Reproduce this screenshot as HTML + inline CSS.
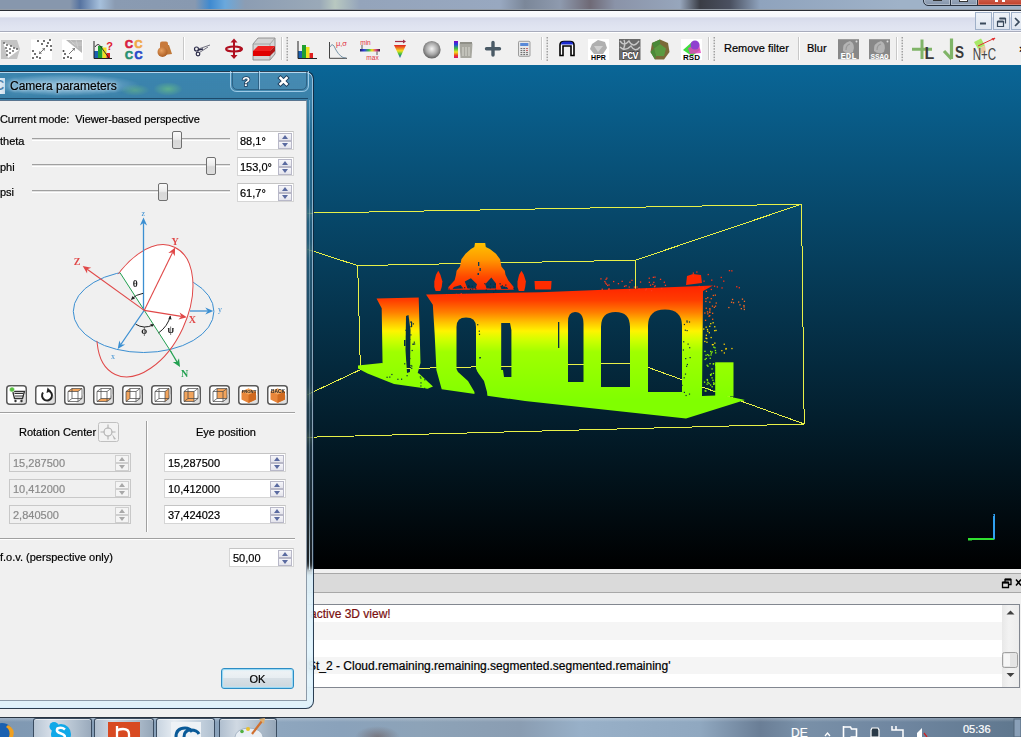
<!DOCTYPE html><html><head><meta charset="utf-8"><style>
*{box-sizing:border-box}
html,body{margin:0;padding:0}
body{width:1021px;height:737px;overflow:hidden;position:relative;font-family:"Liberation Sans",sans-serif;font-size:11px;color:#000;background:#f0f0f0}
.a{position:absolute}
.t{position:absolute;white-space:nowrap;line-height:13px;font-size:11px;-webkit-text-stroke:0.2px currentColor}
#desk{left:0;top:0;width:1021px;height:11px;background:linear-gradient(90deg,#8797ad 0,#8797ad 70px,#5673a0 80px,#a6c0dc 100px,#8a9bb2 115px,#8899b0 195px,#3f8ad0 210px,#6aa8dc 225px,#8c9db3 245px,#9aa9b8 320px,#b8c8c0 335px,#94a4bb 360px,#98a8c0 500px,#7b8799 525px,#8e9aae 560px,#6f6a76 590px,#8a93a8 615px,#97a6bc 680px,#3a3d45 700px,#4a5060 730px,#8fa3bd 760px,#9fb2c8 900px)}
#capline{left:0;top:9px;width:1021px;height:2px;border-top:1px solid rgba(220,230,240,0.6);background:#2a2e36}
#menubar{left:0;top:11px;width:1021px;height:21px;background:linear-gradient(#fbfcfe 0,#f5f7fb 5.5px,#d7dbeb 7px,#dde1ef 60%,#e2e6f2 100%);border-bottom:1px solid #a8acbc}
#toolbar{left:0;top:32px;width:1021px;height:33px;background:#f0f0f0;border-top:1px solid #fff}
#view{left:0;top:65px;width:1021px;height:504px;background:linear-gradient(#0a6697,#000)}
#bottom{left:0;top:569px;width:1021px;height:148px;background:#f0f0f0}
#ctitle{left:0;top:574px;width:1021px;height:20px;background:#dcdcdc;border-top:1px solid #a0a0a0;border-bottom:1px solid #a0a0a0}
#cbox{left:300px;top:604px;width:720px;height:84px;border:1px solid #828790;background:#fff}
#taskbar{left:0;top:717px;width:1021px;height:20px;background:linear-gradient(90deg,#5b7592,#6b84a0 30%,#5d7895 60%,#6f88a3 100%);border-top:1px solid #3a4a5c}
#dlg{left:-8px;top:71px;width:322px;height:638px;border-radius:0 8px 8px 0;background:linear-gradient(rgba(190,220,245,0.28) 0,rgba(190,220,245,0.28) 28px,rgba(190,220,245,0.16) 60px,rgba(190,220,245,0.14) 494px,rgba(220,242,252,0.78) 504px);-webkit-backdrop-filter:blur(4px);backdrop-filter:blur(4px);border:1px solid rgba(10,30,50,0.85);box-shadow:inset 0 1px 0 rgba(210,235,255,0.8),inset -1px 0 0 rgba(210,235,255,0.6),inset 0 -1px 0 rgba(210,235,255,0.6)}
#dlgc{left:0;top:100px;width:307px;height:601px;background:#f0f0f0;border-right:1px solid #8c9aa8;border-bottom:1px solid #8c9aa8;border-top:1px solid #5a7590}
.tglow{text-shadow:0 0 6px #cfe3f2,0 0 3px #cfe3f2}
.tbtn{border:1px solid rgba(220,235,250,0.55);border-top:none;background:rgba(255,255,255,0.06)}
.groove{position:absolute;left:32px;width:198px;height:3px;border-top:1px solid #a0a0a0;border-bottom:1px solid #fff;background:#e3e3e3}
.handle{position:absolute;width:10px;height:18px;border:1px solid #707070;border-radius:2px;background:linear-gradient(#fafafa,#ececec 45%,#d8d8d8 55%,#dcdcdc)}
.spin{position:absolute;height:19px;border:1px solid #d5d5d5;border-top-color:#c4c4c4;background:#fff}
.spin .sb{position:absolute;right:1px;top:1px;width:14px;height:15px}
.spin .sb i{position:absolute;left:0;width:14px;height:8px;border:1px solid #b8b8c8;background:linear-gradient(#f6f6fa,#e4e4ec)}
.spin .sb i.up{top:0}
.spin .sb i.dn{top:8px}
.spin .sb i:after{content:"";position:absolute;left:3px;border-left:3px solid transparent;border-right:3px solid transparent}
.spin .sb i.up:after{top:1px;border-bottom:4px solid #5a6aa0}
.spin .sb i.dn:after{top:1px;border-top:4px solid #5a6aa0}
.spin.dis{background:#f0f0f0;border-color:#c8c8c8}
.spin.dis .t{color:#8a8a8a}
.spin.dis .sb i{border-color:#cfcfcf;background:#f4f4f4}
.spin.dis .sb i.up:after{border-bottom-color:#a8a8a8}
.spin.dis .sb i.dn:after{border-top-color:#a8a8a8}
.vbtn{position:absolute;top:385px;width:21px;height:20px;border:1px solid #707070;border-radius:3px;background:linear-gradient(#f6f6f6,#e8e8e8 50%,#d9d9d9 51%,#d0d0d0)}
</style></head><body><div id="desk" class="a"></div><div id="capline" class="a"></div><div id="menubar" class="a"></div><div id="toolbar" class="a"></div><svg class="a" style="left:0;top:0" width="1021" height="66" viewBox="0 0 1021 66"><defs>
<linearGradient id="rb" x1="0" y1="0" x2="0" y2="1"><stop offset="0" stop-color="#e02020"/><stop offset="0.25" stop-color="#f08020"/><stop offset="0.45" stop-color="#f0e020"/><stop offset="0.7" stop-color="#40c040"/><stop offset="1" stop-color="#2040d0"/></linearGradient>
<linearGradient id="rbv" x1="0" y1="0" x2="0" y2="1"><stop offset="0" stop-color="#8000c0"/><stop offset="0.2" stop-color="#2040e0"/><stop offset="0.45" stop-color="#40c040"/><stop offset="0.65" stop-color="#f0e020"/><stop offset="0.85" stop-color="#f04020"/><stop offset="1" stop-color="#d01080"/></linearGradient>
<linearGradient id="rbh" x1="0" y1="0" x2="1" y2="0"><stop offset="0" stop-color="#202060"/><stop offset="0.2" stop-color="#3040e0"/><stop offset="0.45" stop-color="#40c040"/><stop offset="0.6" stop-color="#f0e020"/><stop offset="0.8" stop-color="#e04080"/><stop offset="1" stop-color="#302040"/></linearGradient>
<radialGradient id="sph" cx="0.5" cy="0.45" r="0.55"><stop offset="0" stop-color="#f4f4f4"/><stop offset="0.6" stop-color="#a8a8a8"/><stop offset="1" stop-color="#606060"/></radialGradient>
<radialGradient id="brn" cx="0.4" cy="0.35" r="0.7"><stop offset="0" stop-color="#e8a060"/><stop offset="1" stop-color="#a85a20"/></radialGradient>
</defs><path d="M1,40 L17,40 L20,49 L17,59 L1,59 Z" fill="#c4c4c4"/><path d="M3,42 L19,50 L8,58 Z" fill="#fff"/><circle cx="4" cy="43" r="0.9" fill="#555"/><circle cx="7" cy="45" r="0.9" fill="#555"/><circle cx="11" cy="46" r="0.9" fill="#555"/><circle cx="14" cy="48" r="0.9" fill="#555"/><circle cx="17" cy="49" r="0.9" fill="#555"/><circle cx="6" cy="48" r="0.9" fill="#555"/><circle cx="10" cy="49" r="0.9" fill="#555"/><circle cx="13" cy="51" r="0.9" fill="#555"/><circle cx="7" cy="51" r="0.9" fill="#555"/><circle cx="10" cy="53" r="0.9" fill="#555"/><circle cx="7" cy="55" r="0.9" fill="#555"/><rect x="31" y="39.5" width="21" height="20.5" fill="#fff"/><circle cx="38" cy="41" r="1" fill="#444"/><circle cx="44" cy="41" r="1" fill="#444"/><circle cx="50" cy="40" r="1" fill="#444"/><circle cx="42" cy="44" r="1" fill="#444"/><circle cx="48" cy="43" r="1" fill="#444"/><circle cx="51" cy="46" r="1" fill="#444"/><circle cx="47" cy="46" r="1" fill="#444"/><circle cx="51" cy="50" r="1" fill="#444"/><circle cx="33" cy="51" r="1" fill="#444"/><circle cx="35" cy="54" r="1" fill="#444"/><circle cx="33" cy="58" r="1" fill="#444"/><circle cx="37" cy="57" r="1" fill="#444"/><circle cx="40" cy="58" r="1" fill="#444"/><path d="M39,54 L45,48" stroke="#777" stroke-width="1"/><path d="M45,48 l-3,0.5 l2.5,2.5z M39,54 l0.5,-3 l2.5,2.5z" fill="#777"/><rect x="62" y="39.5" width="21" height="20.5" fill="#fff"/><path d="M66,40 L82,40 L82,53 Z" fill="#b8b8b8"/><path d="M70,40 L75,45 L82,45 M76,40 L78,48 M72,43 L82,43" stroke="#d8d8d8" stroke-width="0.6" fill="none"/><circle cx="63.5" cy="51" r="1" fill="#444"/><circle cx="65" cy="54" r="1" fill="#444"/><circle cx="64" cy="58" r="1" fill="#444"/><circle cx="68" cy="57" r="1" fill="#444"/><circle cx="71" cy="58" r="1" fill="#444"/><path d="M69,54 L75,48" stroke="#777" stroke-width="1"/><path d="M75,48 l-3,0.5 l2.5,2.5z" fill="#777"/><rect x="94" y="51" width="4" height="7.5" fill="#1a60b0"/><rect x="98" y="46" width="4.5" height="12.5" fill="#20a030"/><rect x="102.5" y="47.5" width="4" height="11" fill="#f0e020"/><rect x="106.5" y="53" width="3.5" height="5.5" fill="#e02020"/><path d="M94,41 L94,58.5 L112,58.5" stroke="#222" stroke-width="1" fill="none"/><path d="M95,47 Q98,42 101,47 L109,58" stroke="#222" stroke-width="0.9" fill="none"/><text x="109.5" y="50" font-size="11" font-weight="bold" fill="#e02030" text-anchor="middle" style="font-family:'Liberation Sans'">?</text><text x="129" y="48" font-size="11" font-weight="bold" fill="#d81e3c" stroke="#d81e3c" stroke-width="0.7" text-anchor="middle" style="font-family:'Liberation Sans'">C</text><text x="138.5" y="48" font-size="11" font-weight="bold" fill="#f0a848" stroke="#f0a848" stroke-width="0.7" text-anchor="middle" style="font-family:'Liberation Sans'">C</text><text x="129" y="58.5" font-size="11" font-weight="bold" fill="#289070" stroke="#289070" stroke-width="0.7" text-anchor="middle" style="font-family:'Liberation Sans'">C</text><text x="138.5" y="58.5" font-size="11" font-weight="bold" fill="#2848c8" stroke="#2848c8" stroke-width="0.7" text-anchor="middle" style="font-family:'Liberation Sans'">C</text><path d="M164,45 L169,45 L172,54 L164,55 Z" fill="#c07838"/><rect x="160" y="41.5" width="8" height="9" rx="2" fill="#c87a3c"/><circle cx="162.5" cy="52" r="5" fill="url(#brn)"/><rect x="183" y="37" width="1" height="23" fill="#c8c8c8"/><rect x="184" y="37" width="1" height="23" fill="#fff"/><circle cx="196.5" cy="49" r="2" fill="none" stroke="#2a2a48" stroke-width="1.2"/><circle cx="198" cy="54" r="1.8" fill="none" stroke="#2a2a48" stroke-width="1.2"/><path d="M198.5,49 L210,45 M199.5,52.5 L208,47" stroke="#707080" stroke-width="1"/><path d="M198,50 L203,49" stroke="#2a2a48" stroke-width="1.3"/><g stroke="#b01020" stroke-width="2" fill="none"><path d="M234,41 L234,57"/><ellipse cx="234" cy="49" rx="8" ry="2.5"/></g><path d="M234,38.5 l-3.5,4 h7z M234,59 l-3.5,-4 h7z M243,49 l-3.5,-3 v6z" fill="#b01020"/><path d="M253,44 L258,38 L275,38 L275,54 L270,60 L253,60 Z" fill="#d4d4d4" stroke="#8a8a8a" stroke-width="0.9"/><path d="M253,44 L270,44 L275,38 M270,44 L270,60" stroke="#9a9a9a" stroke-width="0.8" fill="none"/><path d="M253,51 L258,46 L275,46 L270,51Z" fill="#f02020"/><path d="M253,51 L270,51 L270,56 L253,56 Z" fill="#e00000"/><path d="M270,51 L275,46 L275,51 L270,56Z" fill="#b01818"/><rect x="281" y="37" width="1" height="23" fill="#c8c8c8"/><rect x="282" y="37" width="1" height="23" fill="#fff"/><rect x="286.5" y="37.0" width="1.5" height="1.5" fill="#a0a0a0"/><rect x="286.5" y="39.8" width="1.5" height="1.5" fill="#a0a0a0"/><rect x="286.5" y="42.6" width="1.5" height="1.5" fill="#a0a0a0"/><rect x="286.5" y="45.4" width="1.5" height="1.5" fill="#a0a0a0"/><rect x="286.5" y="48.2" width="1.5" height="1.5" fill="#a0a0a0"/><rect x="286.5" y="51.0" width="1.5" height="1.5" fill="#a0a0a0"/><rect x="286.5" y="53.8" width="1.5" height="1.5" fill="#a0a0a0"/><rect x="286.5" y="56.6" width="1.5" height="1.5" fill="#a0a0a0"/><rect x="286.5" y="59.4" width="1.5" height="1.5" fill="#a0a0a0"/><rect x="298" y="51" width="4" height="7.5" fill="#1a60b0"/><rect x="302" y="45" width="4" height="13.5" fill="#20a030"/><rect x="306" y="47" width="3.5" height="11.5" fill="#f0e020"/><rect x="309.5" y="53" width="3.5" height="5.5" fill="#e02020"/><path d="M298,41 L298,58.5 L317,58.5" stroke="#222" stroke-width="1" fill="none"/><path d="M329.5,42 L329.5,58.3 L347,58.3" stroke="#444" stroke-width="1" fill="none"/><path d="M330,47 Q332,43 334,46 Q338,55 343,57.5 L346,58" stroke="#6a8aa0" stroke-width="0.9" fill="none"/><text x="341.5" y="46" font-size="7.5" fill="#e03040" text-anchor="middle" style="font-family:'Liberation Sans'">μ,σ</text><text x="365.5" y="45" font-size="6.5" fill="#e03040" text-anchor="middle" style="font-family:'Liberation Sans'">min</text><text x="372.5" y="59.5" font-size="6.5" fill="#e03040" text-anchor="middle" style="font-family:'Liberation Sans'">max</text><rect x="360" y="49" width="20" height="2.5" fill="url(#rbh)"/><path d="M362,45 L362,49 M377,51.5 L377,55" stroke="#333" stroke-width="0.8"/><path d="M394,45 L406,45 L400,58 Z" fill="url(#rb)"/><path d="M395,41.5 L404,41.5" stroke="#a03048" stroke-width="1.2"/><path d="M406,41.5 l-3,-2 v4z" fill="#a03048"/><circle cx="431.8" cy="49.7" r="8.8" fill="url(#sph)"/><rect x="454" y="41" width="4" height="17" fill="url(#rbv)"/><path d="M459.5,43.5 L472.5,43.5 L471.5,58 L460.5,58 Z" fill="#a8a8a0"/><rect x="460" y="42" width="12" height="2" fill="#909088"/><path d="M463,47 V56 M466,47 V56 M469,47 V56" stroke="#e0e0d8" stroke-width="0.9"/><path d="M493,42.5 V55 M486.5,48.8 H499.5" stroke="#4a5a66" stroke-width="3.4" stroke-linecap="round"/><rect x="518.5" y="41.3" width="11.5" height="15" rx="1" fill="#e8e8e8" stroke="#888" stroke-width="0.8"/><rect x="520.2" y="43" width="8.2" height="3" fill="#5a8ad8"/><rect x="520.5" y="48.0" width="1.8" height="1.1" fill="#707070"/><rect x="523.3" y="48.0" width="1.8" height="1.1" fill="#707070"/><rect x="526.1" y="48.0" width="1.8" height="1.1" fill="#c06060"/><rect x="520.5" y="50.0" width="1.8" height="1.1" fill="#707070"/><rect x="523.3" y="50.0" width="1.8" height="1.1" fill="#707070"/><rect x="526.1" y="50.0" width="1.8" height="1.1" fill="#c06060"/><rect x="520.5" y="52.0" width="1.8" height="1.1" fill="#707070"/><rect x="523.3" y="52.0" width="1.8" height="1.1" fill="#707070"/><rect x="526.1" y="52.0" width="1.8" height="1.1" fill="#707070"/><rect x="520.5" y="54.0" width="1.8" height="1.1" fill="#707070"/><rect x="523.3" y="54.0" width="1.8" height="1.1" fill="#707070"/><rect x="526.1" y="54.0" width="1.8" height="1.1" fill="#707070"/><rect x="541" y="37" width="1" height="23" fill="#c8c8c8"/><rect x="542" y="37" width="1" height="23" fill="#fff"/><rect x="546.5" y="37.0" width="1.5" height="1.5" fill="#a0a0a0"/><rect x="546.5" y="39.8" width="1.5" height="1.5" fill="#a0a0a0"/><rect x="546.5" y="42.6" width="1.5" height="1.5" fill="#a0a0a0"/><rect x="546.5" y="45.4" width="1.5" height="1.5" fill="#a0a0a0"/><rect x="546.5" y="48.2" width="1.5" height="1.5" fill="#a0a0a0"/><rect x="546.5" y="51.0" width="1.5" height="1.5" fill="#a0a0a0"/><rect x="546.5" y="53.8" width="1.5" height="1.5" fill="#a0a0a0"/><rect x="546.5" y="56.6" width="1.5" height="1.5" fill="#a0a0a0"/><rect x="546.5" y="59.4" width="1.5" height="1.5" fill="#a0a0a0"/><path d="M560,55.5 L560,45 Q560,41.5 564,41.5 L570,41.5 Q574,41.5 574,45 L574,55.5 L571,55.5 L571,46 L563,46 L563,55.5 Z" fill="#fff" stroke="#000" stroke-width="1.6"/><path d="M561,44.5 Q561,41.5 564,41.5 L570,41.5 Q573,41.5 573,44.5 Z" fill="#1a2ad0"/><rect x="588" y="39" width="21" height="21" fill="#fff"/><path d="M592,44 L598,40 L605,42 L607,48 L603,54 L594,54 L590,49 Z" fill="#b0b0b0"/><path d="M594,46 L603,46 L598,52 Z" fill="#d0d0d0"/><text x="598.5" y="59.5" font-size="7" font-weight="bold" fill="#000" text-anchor="middle" style="font-family:'Liberation Sans'">HPR</text><rect x="619" y="39" width="21.5" height="21" fill="#6a6a6a"/><path d="M620,41 Q624,47 629,41 Q633,49 639,41 M620,47 Q625,52 631,46 Q635,53 640,47 M624,40 Q626,44 623,50" stroke="#c8c8c8" stroke-width="1.4" fill="none"/><text x="629.8" y="59" font-size="10" font-weight="bold" fill="#fff" stroke="#222" stroke-width="0.8" paint-order="stroke" text-anchor="middle" style="font-family:'Liberation Mono'" letter-spacing="-0.8">PCV</text><path d="M660,39.5 L668,43 L669.5,52 L664,59.5 L655,59.5 L650.5,52 L652,43 Z" fill="#7a6a38"/><path d="M660,44 L666,48.5 L664,56 L656,56 L654,48.5 Z" fill="#5a9a40"/><path d="M652,43 L660,39.5 L660,44 L654,48.5 Z M650.5,52 L654,48.5 L656,56 L655,59.5Z" fill="#4a8a38"/><rect x="681" y="39" width="21" height="21" fill="#fff"/><path d="M683,50 L692,42 L700,50 L692,56 Z" fill="#40e040"/><path d="M688,48 L699,44 L701,53 L690,54Z" fill="#e040c0" opacity="0.85"/><circle cx="695" cy="45" r="4.5" fill="#9040d0"/><text x="691.5" y="59.5" font-size="8" font-weight="bold" fill="#000" text-anchor="middle" style="font-family:'Liberation Sans'">RSD</text><rect x="708" y="37" width="1" height="23" fill="#c8c8c8"/><rect x="709" y="37" width="1" height="23" fill="#fff"/><rect x="713.5" y="37.0" width="1.5" height="1.5" fill="#a0a0a0"/><rect x="713.5" y="39.8" width="1.5" height="1.5" fill="#a0a0a0"/><rect x="713.5" y="42.6" width="1.5" height="1.5" fill="#a0a0a0"/><rect x="713.5" y="45.4" width="1.5" height="1.5" fill="#a0a0a0"/><rect x="713.5" y="48.2" width="1.5" height="1.5" fill="#a0a0a0"/><rect x="713.5" y="51.0" width="1.5" height="1.5" fill="#a0a0a0"/><rect x="713.5" y="53.8" width="1.5" height="1.5" fill="#a0a0a0"/><rect x="713.5" y="56.6" width="1.5" height="1.5" fill="#a0a0a0"/><rect x="713.5" y="59.4" width="1.5" height="1.5" fill="#a0a0a0"/><rect x="798" y="37" width="1" height="23" fill="#c8c8c8"/><rect x="799" y="37" width="1" height="23" fill="#fff"/><rect x="838" y="39.2" width="21" height="20" fill="#888"/><path d="M843,51 Q842,43 850,41 Q856,44 853,52 Q848,55 843,51 Z" fill="#b4b4b4"/><path d="M846,50 Q846,45 850,44" stroke="#999" stroke-width="1.2" fill="none"/><circle cx="856.5" cy="41.5" r="1" fill="#ddd"/><text x="848.5" y="58.6" font-size="9" fill="#fff" text-anchor="middle" style="font-family:'Liberation Mono'" font-weight="bold">EDL</text><rect x="869" y="39.2" width="21" height="20" fill="#888"/><path d="M874,51 Q873,43 881,41 Q887,44 884,52 Q879,55 874,51 Z" fill="#b4b4b4"/><path d="M877,50 Q877,45 881,44" stroke="#999" stroke-width="1.2" fill="none"/><circle cx="887.5" cy="41.5" r="1" fill="#ddd"/><text x="879.5" y="58.6" font-size="7.6" fill="#fff" text-anchor="middle" style="font-family:'Liberation Mono'" font-weight="bold">SSAO</text><rect x="896" y="37" width="1" height="23" fill="#c8c8c8"/><rect x="897" y="37" width="1" height="23" fill="#fff"/><rect x="901.5" y="37.0" width="1.5" height="1.5" fill="#a0a0a0"/><rect x="901.5" y="39.8" width="1.5" height="1.5" fill="#a0a0a0"/><rect x="901.5" y="42.6" width="1.5" height="1.5" fill="#a0a0a0"/><rect x="901.5" y="45.4" width="1.5" height="1.5" fill="#a0a0a0"/><rect x="901.5" y="48.2" width="1.5" height="1.5" fill="#a0a0a0"/><rect x="901.5" y="51.0" width="1.5" height="1.5" fill="#a0a0a0"/><rect x="901.5" y="53.8" width="1.5" height="1.5" fill="#a0a0a0"/><rect x="901.5" y="56.6" width="1.5" height="1.5" fill="#a0a0a0"/><rect x="901.5" y="59.4" width="1.5" height="1.5" fill="#a0a0a0"/><path d="M922,39.5 V59 M912,49.2 H932" stroke="#80b468" stroke-width="3"/><text x="929.5" y="58.5" font-size="16" font-weight="bold" fill="#3a3a3a" text-anchor="middle" style="font-family:'Liberation Sans'">L</text><path d="M951.5,38.5 V59 M944,51 L951.5,59" stroke="#80b468" stroke-width="3.2"/><text x="959.5" y="58.5" font-size="16" font-weight="bold" fill="#3a3a3a" text-anchor="middle" style="font-family:'Liberation Sans'" transform="translate(959.5 0) scale(0.85 1) translate(-959.5 0)">S</text><path d="M974,42 L981,38.5 L985,45.5 L978,49Z" fill="#a8e868"/><path d="M978,49 L985,45.5 L986,52 L980,54Z" fill="#e8c8a0"/><path d="M978,46 L995,38" stroke="#e03030" stroke-width="1"/><path d="M995.5,38 l-4,0.2 l1.8,2.6z" fill="#e03030"/><text x="984.5" y="60" font-size="16.5" fill="#444" text-anchor="middle" style="font-family:'Liberation Sans'" transform="translate(984.5 0) scale(0.7 1) translate(-984.5 0)">N+C</text><text x="1019" y="53" font-size="11" font-weight="bold" fill="#000" style="font-family:'Liberation Sans'">×</text></svg><div class="t" style="left:724px;top:42px">Remove filter</div><div class="t" style="left:807px;top:42px">Blur</div><div id="view" class="a"></div><svg class="a" style="left:0;top:0" width="1021" height="570" viewBox="0 0 1021 570"><line x1="280" y1="213.6" x2="801.5" y2="204.2" stroke="#e8f048" stroke-width="1" shape-rendering="crispEdges"/><line x1="801.5" y1="204.2" x2="804.2" y2="424" stroke="#e8f048" stroke-width="1" shape-rendering="crispEdges"/><line x1="280" y1="438" x2="804.2" y2="424" stroke="#e8f048" stroke-width="1" shape-rendering="crispEdges"/><line x1="280" y1="240.5" x2="357.7" y2="265.6" stroke="#e8f048" stroke-width="1" shape-rendering="crispEdges"/><line x1="357.7" y1="265.6" x2="635.3" y2="260.2" stroke="#e8f048" stroke-width="1" shape-rendering="crispEdges"/><line x1="635.3" y1="260.2" x2="801.5" y2="204.2" stroke="#e8f048" stroke-width="1" shape-rendering="crispEdges"/><line x1="357.7" y1="265.6" x2="360.4" y2="369.7" stroke="#e8f048" stroke-width="1" shape-rendering="crispEdges"/><line x1="360.4" y1="369.7" x2="280" y2="407.5" stroke="#e8f048" stroke-width="1" shape-rendering="crispEdges"/><line x1="360.4" y1="369.7" x2="636" y2="363" stroke="#e8f048" stroke-width="1" shape-rendering="crispEdges"/><line x1="636" y1="363" x2="804.2" y2="424" stroke="#e8f048" stroke-width="1" shape-rendering="crispEdges"/><line x1="635.3" y1="260.2" x2="636" y2="363" stroke="#e8f048" stroke-width="1" shape-rendering="crispEdges"/><path d="M969,539 L994.5,539" stroke="#30e030" stroke-width="2"/><path d="M994,539 L994,516" stroke="#30a0f0" stroke-width="2"/><path d="M993,514 l2,0 l0,4z" fill="#30a0f0"/><rect x="968" y="538" width="4" height="2.5" fill="#30e030"/></svg><svg class="a" style="left:0;top:0" width="1021" height="570" viewBox="0 0 1021 570"><defs>
<linearGradient id="cg" gradientUnits="userSpaceOnUse" x1="0" y1="284" x2="0" y2="400">
<stop offset="0" stop-color="#ff2000"/><stop offset="0.138" stop-color="#ff3c00"/><stop offset="0.241" stop-color="#ff7c00"/><stop offset="0.328" stop-color="#ffc000"/><stop offset="0.405" stop-color="#fff400"/><stop offset="0.483" stop-color="#d0ff00"/><stop offset="0.586" stop-color="#a0ff00"/><stop offset="1" stop-color="#80ff00"/></linearGradient>
<linearGradient id="dg" gradientUnits="userSpaceOnUse" x1="0" y1="242" x2="0" y2="292">
<stop offset="0" stop-color="#ffc400"/><stop offset="0.35" stop-color="#ff9800"/><stop offset="0.7" stop-color="#ff4800"/><stop offset="1" stop-color="#ff2000"/></linearGradient>
<mask id="holes" maskUnits="userSpaceOnUse" x="0" y="0" width="1021" height="570"><rect width="1021" height="570" fill="#fff"/>
<g fill="#000"><path d="M406,316 L408.5,315 L410.5,330 L410,372 L407,373 L405.5,350 Z"/><rect x="404" y="340" width="1.5" height="6"/><rect x="411" y="322" width="1.2" height="5"/><path d="M456.5,369 L456.5,327 Q456.5,317.6 466,317.6 Q476,317.6 476,327 L476,368.5 L477.5,372 L484,381 L487,392 L488,402 L474,402 L474.5,392 L468,381 L458,372 Z"/><path d="M501.2,370 L501.2,323 L510,323 L511.4,330 L511.4,377 L504,377 L503,370 Z"/><rect x="558" y="322" width="1.3" height="26"/><path d="M568,382 L568,322 Q568,312 575,312 Q583.5,312 583.5,324 L583.5,382 Z"/><path d="M601,387 L601,327 Q601,312 615.5,312 Q630,312 630,327 L630,387 Z"/><path d="M648,392 L648,326 Q648,309.5 665,309.5 Q682,309.5 682,326 L682,392 Z"/></g></mask></defs><g mask="url(#holes)"><path d="M376.5,298.5 L418.7,297.5 L420.5,363 L417,375.5 L390,372 L382.6,366.4 L381.7,308.2 Z" fill="url(#cg)"/><path d="M358,365.5 L382,363 L419,373.4 L433,386.6 L427.6,388.8 L394,384 L367.6,373.4 L358,368.5 Z" fill="url(#cg)"/><path d="M426,294.5 L540,292.2 L713,285.4 L703,291 L702,396 L723,395.3 L745,400 L686,418.5 L525,401 L441.7,389.3 L436.4,369.9 L434.6,332.9 L432.8,304.7 Z" fill="url(#cg)"/><path d="M715.2,362.3 L733.5,362.3 L733.5,396.5 L715.2,396.5 Z" fill="url(#cg)"/><polygon points="475.0,242.9 485.2,242.9 485.8,247.0 489.9,249.0 496.0,253.8 500.1,259.2 501.4,266.6 504.8,270.7 505.5,274.8 508.2,280.2 513.7,287.0 513.7,289.7 447.8,289.7 448.5,287.0 454.6,280.2 456.0,274.8 456.6,270.7 460.0,266.6 461.4,259.2 465.5,253.8 470.9,249.0 474.3,247.0" fill="url(#dg)"/><polygon points="438.3,270.7 440.4,274.8 442.4,281.6 441.7,287.0 440.4,291.1 435.6,291.1 434.3,287.0 434.3,281.6 436.0,274.8" fill="#ff3000"/><polygon points="521.5,270.7 523.8,274.8 525.9,281.6 525.2,287.0 524.2,291.1 518.8,291.1 517.5,287.0 517.5,281.6 519.1,274.8" fill="#ff3000"/><g fill="#083a58"><polygon points="464.8,281.6 470.9,278.2 477.0,284.3 475.7,288.6 467.5,288.4"/><polygon points="485.2,284.3 491.3,277.5 496.0,283.6 496.0,288.4 486.5,288.6"/><polygon points="453.9,287.0 460.7,285.0 463.4,288.6 452.6,289.0"/><polygon points="500.1,285.7 506.9,287.0 508.2,289.0 501.4,289.0"/><rect x="478" y="262" width="1.3" height="4"/><rect x="479.5" y="268" width="1.3" height="3"/><rect x="477.5" y="273" width="1.5" height="2"/></g><path d="M534.5,281 L551.6,281 L551,289.5 L535,289.5 Z" fill="#ff2c00"/><path d="M687,276 L693,274 L701,275 L702,283 L686,285 Z" fill="#ff2800"/><g fill="#062c42"><rect x="406.4" y="347.4" width="1.2" height="1.2"/><rect x="407.7" y="350.6" width="1.2" height="1.2"/><rect x="410.3" y="321.5" width="1.2" height="1.2"/><rect x="404.1" y="363.2" width="1.2" height="1.2"/><rect x="406.6" y="330.7" width="1.2" height="1.2"/><rect x="414.0" y="343.4" width="1.2" height="1.2"/><rect x="412.4" y="343.7" width="1.2" height="1.2"/><rect x="410.4" y="326.1" width="1.2" height="1.2"/><rect x="410.3" y="364.9" width="1.2" height="1.2"/><rect x="409.2" y="358.0" width="1.2" height="1.2"/><rect x="410.7" y="321.5" width="1.2" height="1.2"/><rect x="411.6" y="349.9" width="1.2" height="1.2"/><rect x="407.0" y="319.7" width="1.2" height="1.2"/><rect x="412.7" y="343.5" width="1.2" height="1.2"/><rect x="411.2" y="365.5" width="1.2" height="1.2"/><rect x="411.1" y="367.7" width="1.2" height="1.2"/><rect x="407.9" y="361.2" width="1.2" height="1.2"/><rect x="408.4" y="368.5" width="1.2" height="1.2"/><rect x="412.8" y="323.3" width="1.2" height="1.2"/><rect x="405.4" y="329.7" width="1.2" height="1.2"/><rect x="413.7" y="341.6" width="1.2" height="1.2"/><rect x="410.3" y="334.3" width="1.2" height="1.2"/><rect x="409.1" y="338.8" width="1.2" height="1.2"/><rect x="407.5" y="349.6" width="1.2" height="1.2"/><rect x="409.8" y="366.8" width="1.2" height="1.2"/><rect x="478.7" y="380.4" width="1.2" height="1.2"/><rect x="479.4" y="384.4" width="1.2" height="1.2"/><rect x="478.7" y="330.6" width="1.2" height="1.2"/><rect x="479.4" y="382.7" width="1.2" height="1.2"/><rect x="479.6" y="357.0" width="1.2" height="1.2"/><rect x="478.9" y="333.7" width="1.2" height="1.2"/><rect x="479.3" y="357.3" width="1.2" height="1.2"/><rect x="477.1" y="324.1" width="1.2" height="1.2"/><rect x="479.4" y="384.3" width="1.2" height="1.2"/><rect x="476.4" y="372.0" width="1.2" height="1.2"/><rect x="684.7" y="329.6" width="1.2" height="1.2"/><rect x="683.6" y="377.2" width="1.2" height="1.2"/><rect x="688.9" y="321.4" width="1.2" height="1.2"/><rect x="686.5" y="321.5" width="1.2" height="1.2"/><rect x="687.5" y="343.5" width="1.2" height="1.2"/><rect x="688.9" y="393.5" width="1.2" height="1.2"/><rect x="685.5" y="394.9" width="1.2" height="1.2"/><rect x="683.8" y="323.9" width="1.2" height="1.2"/><rect x="686.4" y="320.4" width="1.2" height="1.2"/><rect x="682.8" y="349.4" width="1.2" height="1.2"/><rect x="686.5" y="330.0" width="1.2" height="1.2"/><rect x="681.4" y="384.8" width="1.2" height="1.2"/><rect x="683.8" y="391.8" width="1.2" height="1.2"/><rect x="689.1" y="347.1" width="1.2" height="1.2"/><rect x="685.1" y="358.0" width="1.2" height="1.2"/><rect x="686.8" y="363.9" width="1.2" height="1.2"/><rect x="686.0" y="365.7" width="1.2" height="1.2"/><rect x="689.5" y="357.0" width="1.2" height="1.2"/><rect x="684.9" y="373.5" width="1.2" height="1.2"/><rect x="683.1" y="341.2" width="1.2" height="1.2"/><rect x="513.5" y="287.7" width="1.2" height="1.2"/><rect x="484.3" y="283.1" width="1.2" height="1.2"/><rect x="475.2" y="288.2" width="1.2" height="1.2"/><rect x="448.4" y="288.5" width="1.2" height="1.2"/><rect x="490.0" y="283.5" width="1.2" height="1.2"/><rect x="489.7" y="287.2" width="1.2" height="1.2"/><rect x="493.2" y="286.2" width="1.2" height="1.2"/><rect x="495.1" y="289.6" width="1.2" height="1.2"/><rect x="448.5" y="283.5" width="1.2" height="1.2"/><rect x="493.0" y="291.7" width="1.2" height="1.2"/><rect x="464.1" y="287.1" width="1.2" height="1.2"/><rect x="487.3" y="285.9" width="1.2" height="1.2"/><rect x="471.7" y="285.8" width="1.2" height="1.2"/><rect x="472.1" y="288.4" width="1.2" height="1.2"/><rect x="467.4" y="286.4" width="1.2" height="1.2"/><rect x="499.5" y="283.2" width="1.2" height="1.2"/><rect x="485.7" y="289.6" width="1.2" height="1.2"/><rect x="468.1" y="285.0" width="1.2" height="1.2"/><rect x="501.7" y="285.1" width="1.2" height="1.2"/><rect x="459.7" y="286.9" width="1.2" height="1.2"/><rect x="494.5" y="283.9" width="1.2" height="1.2"/><rect x="468.9" y="286.0" width="1.2" height="1.2"/><rect x="503.7" y="286.9" width="1.2" height="1.2"/><rect x="505.2" y="284.5" width="1.2" height="1.2"/><rect x="469.9" y="288.9" width="1.2" height="1.2"/><rect x="424.2" y="379.2" width="1.2" height="1.2"/><rect x="391.3" y="373.9" width="1.2" height="1.2"/><rect x="406.5" y="375.1" width="1.2" height="1.2"/><rect x="420.3" y="385.4" width="1.2" height="1.2"/><rect x="389.2" y="376.5" width="1.2" height="1.2"/><rect x="420.4" y="382.3" width="1.2" height="1.2"/><rect x="420.3" y="377.5" width="1.2" height="1.2"/><rect x="386.5" y="376.7" width="1.2" height="1.2"/><rect x="419.7" y="376.3" width="1.2" height="1.2"/><rect x="397.3" y="378.7" width="1.2" height="1.2"/><rect x="401.0" y="378.6" width="1.2" height="1.2"/><rect x="426.0" y="374.5" width="1.2" height="1.2"/><rect x="380.2" y="387.1" width="1.2" height="1.2"/><rect x="424.0" y="387.8" width="1.2" height="1.2"/><rect x="401.7" y="387.2" width="1.2" height="1.2"/></g></g><rect x="743.8" y="300.7" width="1.3" height="1.3" fill="#ff6a20"/><rect x="740.7" y="308.0" width="1.3" height="1.3" fill="#ff6a20"/><rect x="739.3" y="304.2" width="1.3" height="1.3" fill="#ff6a20"/><rect x="732.9" y="302.1" width="1.3" height="1.3" fill="#ff6a20"/><rect x="731.9" y="298.8" width="1.3" height="1.3" fill="#ff6a20"/><rect x="738.0" y="301.4" width="1.3" height="1.3" fill="#ff6a20"/><rect x="741.8" y="298.5" width="1.3" height="1.3" fill="#ff6a20"/><rect x="743.4" y="306.3" width="1.3" height="1.3" fill="#ff6a20"/><rect x="743.7" y="308.8" width="1.3" height="1.3" fill="#ff6a20"/><rect x="743.3" y="304.9" width="1.3" height="1.3" fill="#ff6a20"/><rect x="728.2" y="306.9" width="1.3" height="1.3" fill="#ff6a20"/><rect x="730.9" y="301.6" width="1.3" height="1.3" fill="#ff6a20"/><rect x="723.1" y="280.5" width="1.3" height="1.3" fill="#ff3010"/><rect x="710.7" y="288.8" width="1.3" height="1.3" fill="#ff3010"/><rect x="720.6" y="276.8" width="1.3" height="1.3" fill="#ff3010"/><rect x="702.6" y="287.2" width="1.3" height="1.3" fill="#ff3010"/><rect x="713.9" y="285.6" width="1.3" height="1.3" fill="#ff3010"/><rect x="707.6" y="273.9" width="1.3" height="1.3" fill="#ff3010"/><rect x="716.7" y="286.3" width="1.3" height="1.3" fill="#ff3010"/><rect x="698.6" y="285.8" width="1.3" height="1.3" fill="#ff3010"/><rect x="736.1" y="286.1" width="1.3" height="1.3" fill="#ff3010"/><rect x="731.2" y="270.2" width="1.3" height="1.3" fill="#ff3010"/><rect x="721.4" y="287.3" width="1.3" height="1.3" fill="#ff3010"/><rect x="692.5" y="275.4" width="1.3" height="1.3" fill="#ff3010"/><rect x="703.4" y="280.5" width="1.3" height="1.3" fill="#ff3010"/><rect x="711.1" y="279.5" width="1.3" height="1.3" fill="#ff3010"/><rect x="728.8" y="270.0" width="1.3" height="1.3" fill="#ff3010"/><rect x="692.7" y="272.5" width="1.3" height="1.3" fill="#ff3010"/><rect x="696.2" y="271.4" width="1.3" height="1.3" fill="#ff3010"/><rect x="738.7" y="287.1" width="1.3" height="1.3" fill="#ff3010"/><rect x="605.9" y="283.5" width="1.3" height="1.3" fill="#ff3818"/><rect x="621.5" y="280.7" width="1.3" height="1.3" fill="#ff3818"/><rect x="623.9" y="285.7" width="1.3" height="1.3" fill="#ff3818"/><rect x="639.9" y="281.4" width="1.3" height="1.3" fill="#ff3818"/><rect x="613.0" y="280.9" width="1.3" height="1.3" fill="#ff3818"/><rect x="608.4" y="284.3" width="1.3" height="1.3" fill="#ff3818"/><rect x="648.7" y="281.7" width="1.3" height="1.3" fill="#ff3818"/><rect x="605.4" y="278.7" width="1.3" height="1.3" fill="#ff3818"/><rect x="625.4" y="285.1" width="1.3" height="1.3" fill="#ff3818"/><rect x="653.2" y="281.7" width="1.3" height="1.3" fill="#ff3818"/><rect x="654.5" y="285.3" width="1.3" height="1.3" fill="#ff3818"/><rect x="629.3" y="281.6" width="1.3" height="1.3" fill="#ff3818"/><rect x="633.7" y="286.5" width="1.3" height="1.3" fill="#ff3818"/><rect x="628.6" y="286.4" width="1.3" height="1.3" fill="#ff3818"/><rect x="631.3" y="279.7" width="1.3" height="1.3" fill="#ff3818"/><rect x="636.4" y="286.4" width="1.3" height="1.3" fill="#ff3818"/><rect x="604.9" y="282.4" width="1.3" height="1.3" fill="#ff3818"/><rect x="629.0" y="289.2" width="1.3" height="1.3" fill="#ff3818"/><rect x="663.7" y="281.6" width="1.3" height="1.3" fill="#ff3818"/><rect x="661.1" y="287.9" width="1.3" height="1.3" fill="#ff3818"/><rect x="617.8" y="283.0" width="1.3" height="1.3" fill="#ff3818"/><rect x="608.4" y="288.2" width="1.3" height="1.3" fill="#ff3818"/><rect x="645.0" y="289.3" width="1.3" height="1.3" fill="#ff3818"/><rect x="653.9" y="286.0" width="1.3" height="1.3" fill="#ff3818"/><rect x="649.9" y="284.5" width="1.3" height="1.3" fill="#ff3818"/><rect x="607.0" y="284.8" width="1.3" height="1.3" fill="#ff3818"/><rect x="600.3" y="278.2" width="1.3" height="1.3" fill="#ff3818"/><rect x="652.7" y="276.7" width="1.3" height="1.3" fill="#ff3818"/><rect x="606.2" y="277.5" width="1.3" height="1.3" fill="#ff3818"/><rect x="659.9" y="278.7" width="1.3" height="1.3" fill="#ff3818"/><rect x="601.6" y="288.6" width="1.3" height="1.3" fill="#ff3818"/><rect x="608.2" y="288.7" width="1.3" height="1.3" fill="#ff3818"/><rect x="645.8" y="288.5" width="1.3" height="1.3" fill="#ff3818"/><rect x="664.8" y="284.7" width="1.3" height="1.3" fill="#ff3818"/><rect x="654.3" y="276.5" width="1.3" height="1.3" fill="#ff3818"/><rect x="652.2" y="283.7" width="1.3" height="1.3" fill="#ff3818"/><rect x="648.6" y="277.6" width="1.3" height="1.3" fill="#ff3818"/><rect x="650.9" y="290.0" width="1.3" height="1.3" fill="#ff3818"/><rect x="604.2" y="280.9" width="1.3" height="1.3" fill="#ff3818"/><rect x="638.4" y="288.4" width="1.3" height="1.3" fill="#ff3818"/><rect x="723.6" y="343.6" width="1.3" height="1.3" fill="#ffd000"/><rect x="723.7" y="352.3" width="1.3" height="1.3" fill="#ffd000"/><rect x="731.3" y="347.9" width="1.3" height="1.3" fill="#ffd000"/><rect x="725.5" y="347.9" width="1.3" height="1.3" fill="#ffd000"/><rect x="725.3" y="348.4" width="1.3" height="1.3" fill="#ffd000"/><rect x="721.2" y="350.0" width="1.3" height="1.3" fill="#ffd000"/><rect x="715.6" y="302.4" width="1.3" height="1.3" fill="#ff5a10"/><rect x="712.7" y="294.8" width="1.3" height="1.3" fill="#ff5a10"/><rect x="712.0" y="312.7" width="1.3" height="1.3" fill="#ff5a10"/><rect x="711.8" y="305.5" width="1.3" height="1.3" fill="#ff5a10"/><rect x="709.3" y="309.3" width="1.3" height="1.3" fill="#ff5a10"/><rect x="714.7" y="294.5" width="1.3" height="1.3" fill="#ff5a10"/><rect x="704.2" y="312.4" width="1.3" height="1.3" fill="#ff5a10"/><rect x="714.9" y="305.5" width="1.3" height="1.3" fill="#ff5a10"/><rect x="708.8" y="311.6" width="1.3" height="1.3" fill="#ff5a10"/><rect x="705.4" y="298.0" width="1.3" height="1.3" fill="#ff5a10"/><rect x="705.6" y="307.6" width="1.3" height="1.3" fill="#ff5a10"/><rect x="707.1" y="297.0" width="1.3" height="1.3" fill="#ff5a10"/><rect x="712.0" y="318.6" width="1.3" height="1.3" fill="#ff5a10"/><rect x="706.8" y="311.2" width="1.3" height="1.3" fill="#ff5a10"/><rect x="708.4" y="315.6" width="1.3" height="1.3" fill="#ff5a10"/><rect x="710.6" y="298.0" width="1.3" height="1.3" fill="#ff5a10"/><rect x="705.8" y="290.7" width="1.3" height="1.3" fill="#ff5a10"/><rect x="709.2" y="301.5" width="1.3" height="1.3" fill="#ff5a10"/><rect x="705.2" y="300.8" width="1.3" height="1.3" fill="#ff5a10"/><rect x="707.2" y="313.2" width="1.3" height="1.3" fill="#ff5a10"/><rect x="704.9" y="319.7" width="1.3" height="1.3" fill="#ff5a10"/><rect x="709.2" y="308.0" width="1.3" height="1.3" fill="#ff5a10"/><rect x="709.1" y="315.0" width="1.3" height="1.3" fill="#ff5a10"/><rect x="713.7" y="306.7" width="1.3" height="1.3" fill="#ff5a10"/><rect x="709.3" y="311.6" width="1.3" height="1.3" fill="#ff5a10"/><rect x="714.1" y="330.0" width="1.3" height="1.3" fill="#ffe000"/><rect x="712.5" y="344.0" width="1.3" height="1.3" fill="#ffe000"/><rect x="709.1" y="325.7" width="1.3" height="1.3" fill="#ffe000"/><rect x="706.1" y="337.9" width="1.3" height="1.3" fill="#ffe000"/><rect x="711.8" y="344.0" width="1.3" height="1.3" fill="#ffe000"/><rect x="714.1" y="326.1" width="1.3" height="1.3" fill="#ffe000"/><rect x="705.5" y="326.5" width="1.3" height="1.3" fill="#ffe000"/><rect x="705.4" y="337.6" width="1.3" height="1.3" fill="#ffe000"/><rect x="714.2" y="342.5" width="1.3" height="1.3" fill="#ffe000"/><rect x="706.3" y="341.6" width="1.3" height="1.3" fill="#ffe000"/><rect x="707.1" y="330.6" width="1.3" height="1.3" fill="#ffe000"/><rect x="712.5" y="322.1" width="1.3" height="1.3" fill="#ffe000"/><rect x="704.2" y="340.8" width="1.3" height="1.3" fill="#ffe000"/><rect x="706.8" y="328.9" width="1.3" height="1.3" fill="#ffe000"/><rect x="710.5" y="336.9" width="1.3" height="1.3" fill="#ffe000"/><rect x="703.1" y="328.4" width="1.3" height="1.3" fill="#ffe000"/><rect x="708.7" y="332.1" width="1.3" height="1.3" fill="#ffe000"/><rect x="705.7" y="334.6" width="1.3" height="1.3" fill="#ffe000"/><rect x="715.4" y="329.8" width="1.3" height="1.3" fill="#ffe000"/><rect x="710.1" y="323.0" width="1.3" height="1.3" fill="#ffe000"/><rect x="706.6" y="378.9" width="1.3" height="1.3" fill="#90ff00"/><rect x="704.5" y="390.2" width="1.3" height="1.3" fill="#90ff00"/><rect x="714.8" y="349.9" width="1.3" height="1.3" fill="#90ff00"/><rect x="715.2" y="364.1" width="1.3" height="1.3" fill="#90ff00"/><rect x="713.0" y="383.6" width="1.3" height="1.3" fill="#90ff00"/><rect x="706.8" y="379.5" width="1.3" height="1.3" fill="#90ff00"/><rect x="711.5" y="386.1" width="1.3" height="1.3" fill="#90ff00"/><rect x="706.5" y="383.5" width="1.3" height="1.3" fill="#90ff00"/><rect x="715.5" y="379.3" width="1.3" height="1.3" fill="#90ff00"/><rect x="710.0" y="350.8" width="1.3" height="1.3" fill="#90ff00"/><rect x="709.4" y="363.0" width="1.3" height="1.3" fill="#90ff00"/><rect x="712.3" y="379.6" width="1.3" height="1.3" fill="#90ff00"/><rect x="710.4" y="354.3" width="1.3" height="1.3" fill="#90ff00"/><rect x="711.4" y="377.2" width="1.3" height="1.3" fill="#90ff00"/><rect x="705.3" y="390.4" width="1.3" height="1.3" fill="#90ff00"/><rect x="711.5" y="351.3" width="1.3" height="1.3" fill="#90ff00"/><rect x="715.1" y="352.2" width="1.3" height="1.3" fill="#90ff00"/><rect x="707.3" y="381.7" width="1.3" height="1.3" fill="#90ff00"/><rect x="710.8" y="373.3" width="1.3" height="1.3" fill="#90ff00"/><rect x="711.4" y="368.3" width="1.3" height="1.3" fill="#90ff00"/><rect x="707.1" y="354.0" width="1.3" height="1.3" fill="#90ff00"/><rect x="703.9" y="381.5" width="1.3" height="1.3" fill="#90ff00"/><rect x="712.8" y="372.7" width="1.3" height="1.3" fill="#90ff00"/><rect x="712.6" y="363.3" width="1.3" height="1.3" fill="#90ff00"/><rect x="706.5" y="364.6" width="1.3" height="1.3" fill="#90ff00"/><rect x="714.3" y="347.1" width="1.3" height="1.3" fill="#90ff00"/><rect x="709.6" y="357.6" width="1.3" height="1.3" fill="#90ff00"/><rect x="713.0" y="363.1" width="1.3" height="1.3" fill="#90ff00"/><rect x="707.3" y="365.6" width="1.3" height="1.3" fill="#90ff00"/><rect x="710.0" y="384.4" width="1.3" height="1.3" fill="#90ff00"/><rect x="707.6" y="388.2" width="1.3" height="1.3" fill="#90ff00"/><rect x="704.5" y="358.8" width="1.3" height="1.3" fill="#90ff00"/><rect x="704.3" y="350.7" width="1.3" height="1.3" fill="#90ff00"/><rect x="713.1" y="382.1" width="1.3" height="1.3" fill="#90ff00"/><rect x="705.4" y="354.6" width="1.3" height="1.3" fill="#90ff00"/><rect x="708.4" y="382.9" width="1.3" height="1.3" fill="#90ff00"/><rect x="713.6" y="383.2" width="1.3" height="1.3" fill="#90ff00"/><rect x="710.7" y="352.5" width="1.3" height="1.3" fill="#90ff00"/><rect x="708.2" y="354.9" width="1.3" height="1.3" fill="#90ff00"/><rect x="709.9" y="374.0" width="1.3" height="1.3" fill="#90ff00"/><rect x="705.6" y="357.8" width="1.3" height="1.3" fill="#90ff00"/><rect x="713.2" y="346.5" width="1.3" height="1.3" fill="#90ff00"/><rect x="713.4" y="390.5" width="1.3" height="1.3" fill="#90ff00"/><rect x="715.3" y="364.5" width="1.3" height="1.3" fill="#90ff00"/><rect x="710.2" y="374.7" width="1.3" height="1.3" fill="#90ff00"/><rect x="459.0" y="295.9" width="1.3" height="1.3" fill="#ff3010"/><rect x="460.6" y="293.2" width="1.3" height="1.3" fill="#ff3010"/><rect x="465.8" y="293.9" width="1.3" height="1.3" fill="#ff3010"/><rect x="458.0" y="294.9" width="1.3" height="1.3" fill="#ff3010"/><rect x="440.1" y="295.1" width="1.3" height="1.3" fill="#ff3010"/><rect x="459.9" y="294.0" width="1.3" height="1.3" fill="#ff3010"/><rect x="455.7" y="293.8" width="1.3" height="1.3" fill="#ff3010"/><rect x="445.8" y="294.1" width="1.3" height="1.3" fill="#ff3010"/></svg><div class="a" style="left:0;top:569px;width:1021px;height:5px;background:#f0f0f0"></div><div class="a" style="left:0;top:573px;width:1021px;height:20px;background:#dadada;border-top:1px solid #a8a8a8;border-bottom:1px solid #a8a8a8"></div><svg class="a" style="left:995px;top:576px" width="26" height="14" viewBox="0 0 26 14"><path d="M10,3.5 h6 v5 h-6z" fill="none" stroke="#000" stroke-width="1.3"/><path d="M7.5,6.5 h6 v5 h-6z" fill="#dadada" stroke="#000" stroke-width="1.3"/><path d="M7.5,6.5 h6" stroke="#000" stroke-width="2"/><path d="M10,3.5 h6" stroke="#000" stroke-width="2"/><path d="M21,3.5 l5,6 M26,3.5 l-5,6" stroke="#000" stroke-width="1.5"/></svg><div class="a" style="left:290px;top:604px;width:730px;height:84px;border:1px solid #828790;background:#fff;overflow:hidden"><div class="a" style="left:0;top:17px;width:712px;height:18px;background:#f5f5f5"></div><div class="a" style="left:0;top:52px;width:712px;height:17px;background:#f5f5f5"></div></div><div class="a" style="left:1002px;top:605px;width:17px;height:82px;background:linear-gradient(90deg,#e8e8e8,#f2f2f2 40%,#ececec)"></div><svg class="a" style="left:1002px;top:605px" width="17" height="82" viewBox="0 0 17 82"><path d="M4.5,9.5 L8.5,5.5 L12.5,9.5z" fill="#404040"/><path d="M4.5,68 L8.5,72 L12.5,68z" fill="#404040"/><rect x="0.5" y="47.5" width="15" height="15" rx="2" fill="#e4e4e4" stroke="#a0a0a0"/><rect x="2" y="49" width="6" height="12" fill="#f6f6f6"/></svg><div class="t" style="left:310px;top:607px;font-size:12px;line-height:14px;color:#7a1010">active 3D view!</div><div class="t" style="left:308px;top:659px;font-size:12px;line-height:14px;color:#000">St_2 - Cloud.remaining.remaining.segmented.segmented.remaining'</div><div class="a" style="left:0;top:717px;width:1021px;height:20px;background:linear-gradient(90deg,#7f98b2 0,#8ea6be 280px,#8aa2bb 340px,#8da3b8 420px,#8a9db2 520px,#98b0c8 580px,#90a8c0 700px,#6a7e96 760px,#7990a8 800px,#6f86a0 900px,#60788f 1010px);border-top:1px solid #2a3440"></div><div class="a" style="left:0;top:718px;width:1021px;height:4px;background:linear-gradient(rgba(255,255,255,0.25),rgba(255,255,255,0))"></div><div class="a" style="left:355px;top:726px;width:45px;height:22px;border-radius:50%;background:radial-gradient(closest-side,rgba(100,75,70,0.5),rgba(100,75,70,0))"></div><div class="a" style="left:33px;top:718px;width:59px;height:19px;border:1px solid #3a4c60;border-bottom:none;border-radius:3px 3px 0 0;background:linear-gradient(90deg,#b8c6d4,#d6dee8 30%,#b4c2d0 70%,#9aaabc);box-shadow:inset 0 1px 0 rgba(255,255,255,0.6)"></div><div class="a" style="left:94px;top:718px;width:60px;height:19px;border:1px solid #3a4c60;border-bottom:none;border-radius:3px 3px 0 0;background:linear-gradient(90deg,#b0bfcf,#cfd8e2 30%,#aebdcc 70%,#95a6b8);box-shadow:inset 0 1px 0 rgba(255,255,255,0.6)"></div><div class="a" style="left:156px;top:718px;width:59px;height:19px;border:1px solid #3a4c60;border-bottom:none;border-radius:3px 3px 0 0;background:linear-gradient(90deg,#c8d4e0,#e6ecf2 30%,#c8d4e0 70%,#b0c0d0);box-shadow:inset 0 1px 0 rgba(255,255,255,0.6)"></div><div class="a" style="left:219px;top:718px;width:58px;height:19px;border:1px solid #3a4c60;border-bottom:none;border-radius:3px 3px 0 0;background:linear-gradient(90deg,#b0bfcf,#d0d9e3 30%,#aebdcc 70%,#95a6b8);box-shadow:inset 0 1px 0 rgba(255,255,255,0.6)"></div><svg class="a" style="left:0;top:717px" width="300" height="20" viewBox="0 0 300 20"><circle cx="2" cy="17" r="11" fill="#1a60b0"/><path d="M8,8 Q16,12 13,20 L9,20 Q11,13 6,10z" fill="#f0a020"/><circle cx="61" cy="17" r="10" fill="#10a8e8"/><circle cx="54" cy="9.5" r="4.5" fill="#10a8e8"/><path d="M65,12.5 Q61.5,9.5 57.5,11.5 Q55.5,15 61,16.5 Q66.5,18 64,22" stroke="#fff" stroke-width="2.6" fill="none"/><rect x="108" y="5" width="32" height="15" fill="#d84a22"/><path d="M117,9 V20 M117,15 Q117,12 123,12 Q129,12 129,17 V20" stroke="#fff" stroke-width="2.3" fill="none"/><rect x="171" y="5" width="30" height="15" fill="#eef2f6"/><path d="M176,20 Q176,11 185,11 Q190,11 192,15 M184,20 Q184,13 191,13 Q197,13 199,17" stroke="#0a5a98" stroke-width="3" fill="none"/><ellipse cx="249" cy="20" rx="14" ry="9" fill="#e8eef4" stroke="#9ab" stroke-width="0.8"/><circle cx="242" cy="14.5" r="1.8" fill="#50b040"/><circle cx="248" cy="12" r="2" fill="#e8c030"/><path d="M252,17 L262,4" stroke="#d07030" stroke-width="2.2"/><path d="M259,2 l6,-1 l-1,6z" fill="#e0b070"/></svg><svg class="a" style="left:780px;top:717px" width="241" height="20" viewBox="0 0 241 20"><path d="M45,19 l2.5,-3 l2.5,3" stroke="#fff" stroke-width="1.3" fill="none"/><path d="M63.5,9 V20 M63.5,10 h7 l1,2 h5 v8 h-6" stroke="#fff" stroke-width="1.6" fill="none"/><path d="M92,11 h6 l1,2 v7 h-8 v-7z" fill="#2a3a48" stroke="#fff" stroke-width="1.2"/><path d="M112,9 v4 h4 v-4 M112,13 h11 v7" stroke="#fff" stroke-width="1.5" fill="none"/><path d="M137,20 v-4 l5,-5 v9" fill="#fff"/><path d="M144,16 l3,4" stroke="#d02020" stroke-width="1.3"/><rect x="234" y="2" width="7" height="18" fill="#8aa0b8" stroke="#506478" stroke-width="1"/></svg><div class="t" style="left:791px;top:727px;color:#fff;font-size:12px">DE</div><div class="t" style="left:963px;top:723px;color:#fff;font-size:11px">05:36</div><div class="a" style="left:923px;top:-6px;width:28px;height:12px;border:1px solid #2a3340;border-radius:0 0 0 5px;background:linear-gradient(#a8b6c8,#8494aa);box-shadow:inset 0 0 0 1px rgba(255,255,255,0.35)"></div><div class="a" style="left:950px;top:-6px;width:28px;height:12px;border:1px solid #2a3340;background:linear-gradient(#a8b6c8,#8494aa);box-shadow:inset 0 0 0 1px rgba(255,255,255,0.35)"></div><div class="a" style="left:977px;top:-6px;width:48px;height:12px;border:1px solid #2a3340;background:linear-gradient(#d87060,#c0402a);box-shadow:inset 0 0 0 1px rgba(255,255,255,0.3)"></div><div class="a" style="left:933px;top:-1px;width:9px;height:2px;background:#fff;border:1px solid #333"></div><div class="a" style="left:959px;top:-3px;width:9px;height:5px;background:#fff;border:1px solid #333"></div><div class="a" style="left:995px;top:-3px;width:3px;height:5px;background:#fff"></div><div class="a" style="left:1002px;top:-3px;width:3px;height:5px;background:#fff"></div><div class="a" style="left:975px;top:12px;width:17px;height:18px;border:1px solid #9fb0c8;background:linear-gradient(#eef2f8,#dfe6f0)"></div><div class="a" style="left:993px;top:12px;width:17px;height:18px;border:1px solid #9fb0c8;background:linear-gradient(#eef2f8,#dfe6f0)"></div><div class="a" style="left:1011px;top:12px;width:17px;height:18px;border:1px solid #9fb0c8;background:linear-gradient(#eef2f8,#dfe6f0)"></div><svg class="a" style="left:975px;top:12px" width="46" height="18" viewBox="0 0 46 18"><rect x="5" y="10.5" width="6" height="2" fill="#3a4a5c"/><path d="M22.5,9.5 h6 v5 h-6z M24.5,6.5 h6 v5" fill="none" stroke="#3a4a5c" stroke-width="1.2"/><path d="M22.5,9.5 h6 M24.5,6.5 h6" stroke="#3a4a5c" stroke-width="2"/><path d="M40,6 l4,4 l-4,4" stroke="#3a4a5c" stroke-width="1.6" fill="none"/></svg><div id="dlg" class="a"></div><div class="a" style="left:0;top:78px;width:5px;height:16px;background:linear-gradient(90deg,#e4eef6,#cadcea);overflow:hidden"><span class="t" style="left:-6px;top:1px;font-size:14px;color:#3a70a0">C</span></div><div class="a" style="left:-10px;top:74px;width:150px;height:22px;border-radius:50%;background:radial-gradient(closest-side,rgba(200,230,250,0.55),rgba(200,230,250,0.25) 70%,rgba(200,230,250,0))"></div><div class="a" style="left:120px;top:84px;width:30px;height:12px;border-radius:50%;background:radial-gradient(closest-side,rgba(120,200,120,0.45),rgba(120,200,120,0))"></div><div class="a" style="left:153px;top:82px;width:30px;height:14px;border-radius:50%;background:radial-gradient(closest-side,rgba(120,210,120,0.55),rgba(120,200,120,0))"></div><div class="a" style="left:0;top:98px;width:308px;height:1px;background:rgba(15,50,80,0.7)"></div><div class="t tglow" style="left:10px;top:79px;font-size:12px;line-height:14px">Camera parameters</div><svg class="a" style="left:225px;top:68px" width="90" height="27" viewBox="0 0 90 27"><path d="M5.5,3 V17 Q5.5,23.5 12,23.5 H77 Q83.5,23.5 83.5,17 V3" fill="rgba(255,255,255,0.05)" stroke="rgba(190,225,250,0.75)" stroke-width="1"/><path d="M7.5,3 V16 Q7.5,21.5 12.5,21.5 H76.5 Q81.5,21.5 81.5,16 V3" fill="none" stroke="rgba(20,50,80,0.45)" stroke-width="1"/><path d="M33.5,3 V21.5" stroke="rgba(20,50,80,0.45)" stroke-width="1"/><path d="M34.5,3 V21.5" stroke="rgba(190,225,250,0.75)" stroke-width="1"/><g stroke="#1c3a58" stroke-width="4.4" stroke-linecap="square"><path d="M55.5,10 L61.5,16 M61.5,10 L55.5,16"/></g><g stroke="#fff" stroke-width="2.6" stroke-linecap="square"><path d="M55.5,10 L61.5,16 M61.5,10 L55.5,16"/></g><text x="21" y="18.3" font-size="13.5" font-weight="bold" fill="#fff" stroke="#1c3a58" stroke-width="1.6" paint-order="stroke" text-anchor="middle" style="font-family:'Liberation Sans'">?</text></svg><div id="dlgc" class="a"></div><div class="a" style="left:309px;top:100px;width:1px;height:470px;background:linear-gradient(rgba(190,225,250,0.45),rgba(190,225,250,0.3) 85%,rgba(220,245,255,0.9))"></div><div class="t" style="left:0;top:113px;letter-spacing:-0.08px">Current mode:&nbsp; Viewer-based perspective</div><div class="t" style="left:0;top:135px">theta</div><div class="t" style="left:0;top:161px">phi</div><div class="t" style="left:0;top:186px">psi</div><div class="groove" style="top:138px"></div><div class="groove" style="top:164px"></div><div class="groove" style="top:190px"></div><div class="handle" style="left:172px;top:131px"></div><div class="handle" style="left:206px;top:157px"></div><div class="handle" style="left:158px;top:183px"></div><div class="spin" style="left:237px;top:131px;width:57px"><span class="t" style="left:2px;top:3px">88,1°</span><div class="sb"><i class="up"></i><i class="dn"></i></div></div><div class="spin" style="left:237px;top:157px;width:57px"><span class="t" style="left:2px;top:3px">153,0°</span><div class="sb"><i class="up"></i><i class="dn"></i></div></div><div class="spin" style="left:237px;top:183px;width:57px"><span class="t" style="left:2px;top:3px">61,7°</span><div class="sb"><i class="up"></i><i class="dn"></i></div></div><svg class="a" style="left:0;top:0" width="310" height="420" viewBox="0 0 310 420"><defs><clipPath id="half"><polygon points="41,150 210,412 300,412 300,150"/></clipPath><mask id="hid" maskUnits="userSpaceOnUse" x="0" y="0" width="310" height="420"><rect width="310" height="420" fill="#fff"/><g clip-path="url(#lefth)"><ellipse cx="143.6" cy="311.4" rx="69.3" ry="40.1" fill="#000"/></g></mask><clipPath id="lefth"><polygon points="41,150 210,412 0,412 0,150"/></clipPath></defs><ellipse cx="143.6" cy="311.4" rx="70.3" ry="41.1" fill="none" stroke="#3b8fd2" stroke-width="1"/><g clip-path="url(#half)"><ellipse cx="144.9" cy="310.8" rx="41.7" ry="70.2" transform="rotate(25 144.9 310.8)" fill="#fff"/></g><g mask="url(#hid)"><ellipse cx="144.9" cy="310.8" rx="41.7" ry="70.2" transform="rotate(25 144.9 310.8)" fill="none" stroke="#e04848" stroke-width="1"/></g><line x1="120" y1="272.7" x2="172" y2="353.3" stroke="#22a050" stroke-width="1"/><line x1="170.5" y1="351.0" x2="177.1" y2="362.1" stroke="#22a050" stroke-width="1.2"/><path d="M180.0,366.9 L172.8,361.9 L177.1,362.1 L179.0,358.2 Z" fill="#22a050"/><line x1="143.5" y1="310.4" x2="143.5" y2="223.1" stroke="#3b8fd2" stroke-width="1.3"/><path d="M143.5,217.5 L147.1,225.5 L143.5,223.1 L139.9,225.5 Z" fill="#3b8fd2"/><line x1="190.0" y1="311.0" x2="207.7" y2="311.0" stroke="#3b8fd2" stroke-width="1.3"/><path d="M213.3,311.0 L205.3,314.6 L207.7,311.0 L205.3,307.4 Z" fill="#3b8fd2"/><line x1="144.2" y1="310.4" x2="120.9" y2="344.4" stroke="#3b8fd2" stroke-width="1.1"/><path d="M117.7,349.0 L119.3,340.4 L120.9,344.4 L125.2,344.4 Z" fill="#3b8fd2"/><line x1="144.2" y1="310.4" x2="87.2" y2="269.3" stroke="#e04848" stroke-width="1.1"/><path d="M82.7,266.0 L91.3,267.8 L87.2,269.3 L87.1,273.6 Z" fill="#e04848"/><line x1="144.2" y1="310.4" x2="172.6" y2="252.4" stroke="#e04848" stroke-width="1.1"/><path d="M175.1,247.4 L174.8,256.2 L172.6,252.4 L168.3,253.0 Z" fill="#e04848"/><line x1="144.2" y1="310.4" x2="181.4" y2="316.4" stroke="#e04848" stroke-width="1.1"/><path d="M186.9,317.3 L178.4,319.6 L181.4,316.4 L179.6,312.5 Z" fill="#e04848"/><path d="M143.2,293.3 Q136,294.5 131.5,299" fill="none" stroke="#222" stroke-width="1"/><path d="M131,300 l1.5,-4 l2.5,2.5z" fill="#222"/><path d="M135.6,324.2 Q144,329.5 153.4,324.8" fill="none" stroke="#222" stroke-width="1"/><path d="M154,324.5 l-3.8,-0.5 l1.8,3z" fill="#222"/><path d="M158.6,332.9 Q168,326 170.2,316.1" fill="none" stroke="#222" stroke-width="1"/><path d="M170.4,315.5 l-2,3.5 l3.2,0.6z" fill="#222"/><text x="77.2" y="265" fill="#e04848" font-size="10" font-weight="bold" text-anchor="middle" style="font-family:'Liberation Serif',serif">Z</text><text x="175.1" y="245" fill="#e04848" font-size="10" font-weight="bold" text-anchor="middle" style="font-family:'Liberation Serif',serif">Y</text><text x="192.3" y="323" fill="#e04848" font-size="10" font-weight="bold" text-anchor="middle" style="font-family:'Liberation Serif',serif">X</text><text x="184.6" y="376.5" fill="#22a050" font-size="10" font-weight="bold" text-anchor="middle" style="font-family:'Liberation Serif',serif">N</text><text x="143.3" y="216" fill="#3b8fd2" font-size="8" text-anchor="middle" style="font-family:'Liberation Serif',serif">z</text><text x="220" y="311.5" fill="#3b8fd2" font-size="8" text-anchor="middle" style="font-family:'Liberation Serif',serif">y</text><text x="113.1" y="359" fill="#3b8fd2" font-size="8" text-anchor="middle" style="font-family:'Liberation Serif',serif">x</text><text x="135.2" y="287" fill="#222" font-size="9.5" font-weight="bold" text-anchor="middle" style="font-family:'Liberation Serif',serif">θ</text><text x="144.2" y="334" fill="#222" font-size="9.5" font-weight="bold" text-anchor="middle" style="font-family:'Liberation Serif',serif">ϕ</text><text x="170.7" y="333" fill="#222" font-size="9.5" font-weight="bold" text-anchor="middle" style="font-family:'Liberation Serif',serif">ψ</text></svg><svg class="a" style="left:0;top:380px" width="300" height="30" viewBox="0 380 300 30"><rect x="6.75" y="385.75" width="19.5" height="18.5" rx="3" fill="#fff" stroke="#5a5a5a" stroke-width="1.5"/><path d="M18,403 L25.5,403 L25.5,394Z" fill="#e0e0e0"/><g transform="translate(7.5,385.5)"><path d="M3,5 L5,5 L7,13 L15,13 L17,6 L6,6" fill="none" stroke="#333" stroke-width="1.3"/><path d="M7,8 h9 M7.5,10.5 h8.5" stroke="#333" stroke-width="1"/><circle cx="8" cy="15.5" r="1.2" fill="#333"/><circle cx="14" cy="15.5" r="1.2" fill="#333"/><circle cx="4.5" cy="4" r="2.6" fill="#58c040" stroke="#fff" stroke-width="0.6"/></g><rect x="35.75" y="385.75" width="19.5" height="18.5" rx="3" fill="#fff" stroke="#5a5a5a" stroke-width="1.5"/><path d="M47,403 L54.5,403 L54.5,394Z" fill="#e0e0e0"/><g transform="translate(36.5,385.5)"><path d="M6.5,7 A5,5 0 1 0 12,5.2" fill="none" stroke="#222" stroke-width="2"/><path d="M11,2 L14.5,5.5 L10,7.5Z" fill="#222"/></g><rect x="64.75" y="385.75" width="19.5" height="18.5" rx="3" fill="#fff" stroke="#5a5a5a" stroke-width="1.5"/><path d="M76,403 L83.5,403 L83.5,394Z" fill="#e0e0e0"/><g transform="translate(65.5,385.5)"><path d="M2.5,6 L6.5,3 L16.5,3 L12.5,6Z" fill="#f2a45c"/><path d="M2.5,6 L12.5,6 L12.5,16 L2.5,16Z M6.5,3 L16.5,3 L16.5,13 L6.5,13Z M2.5,6 L6.5,3 M12.5,6 L16.5,3 M12.5,16 L16.5,13 M2.5,16 L6.5,13" fill="none" stroke="#444" stroke-width="0.7"/></g><rect x="93.75" y="385.75" width="19.5" height="18.5" rx="3" fill="#fff" stroke="#5a5a5a" stroke-width="1.5"/><path d="M105,403 L112.5,403 L112.5,394Z" fill="#e0e0e0"/><g transform="translate(94.5,385.5)"><path d="M2.5,16 L6.5,13 L16.5,13 L12.5,16Z" fill="#f2a45c"/><path d="M2.5,6 L12.5,6 L12.5,16 L2.5,16Z M6.5,3 L16.5,3 L16.5,13 L6.5,13Z M2.5,6 L6.5,3 M12.5,6 L16.5,3 M12.5,16 L16.5,13 M2.5,16 L6.5,13" fill="none" stroke="#444" stroke-width="0.7"/></g><rect x="122.75" y="385.75" width="19.5" height="18.5" rx="3" fill="#fff" stroke="#5a5a5a" stroke-width="1.5"/><path d="M134,403 L141.5,403 L141.5,394Z" fill="#e0e0e0"/><g transform="translate(123.5,385.5)"><path d="M2.5,6 L6.5,3 L6.5,13 L2.5,16Z" fill="#f2a45c"/><path d="M2.5,6 L12.5,6 L12.5,16 L2.5,16Z M6.5,3 L16.5,3 L16.5,13 L6.5,13Z M2.5,6 L6.5,3 M12.5,6 L16.5,3 M12.5,16 L16.5,13 M2.5,16 L6.5,13" fill="none" stroke="#444" stroke-width="0.7"/></g><rect x="151.75" y="385.75" width="19.5" height="18.5" rx="3" fill="#fff" stroke="#5a5a5a" stroke-width="1.5"/><path d="M163,403 L170.5,403 L170.5,394Z" fill="#e0e0e0"/><g transform="translate(152.5,385.5)"><path d="M12.5,6 L16.5,3 L16.5,13 L12.5,16Z" fill="#f2a45c"/><path d="M2.5,6 L12.5,6 L12.5,16 L2.5,16Z M6.5,3 L16.5,3 L16.5,13 L6.5,13Z M2.5,6 L6.5,3 M12.5,6 L16.5,3 M12.5,16 L16.5,13 M2.5,16 L6.5,13" fill="none" stroke="#444" stroke-width="0.7"/></g><rect x="180.75" y="385.75" width="19.5" height="18.5" rx="3" fill="#fff" stroke="#5a5a5a" stroke-width="1.5"/><path d="M192,403 L199.5,403 L199.5,394Z" fill="#e0e0e0"/><g transform="translate(181.5,385.5)"><path d="M2.5,6 L12.5,6 L12.5,16 L2.5,16Z" fill="#f2a45c"/><path d="M2.5,6 L12.5,6 L12.5,16 L2.5,16Z M6.5,3 L16.5,3 L16.5,13 L6.5,13Z M2.5,6 L6.5,3 M12.5,6 L16.5,3 M12.5,16 L16.5,13 M2.5,16 L6.5,13" fill="none" stroke="#444" stroke-width="0.7"/></g><rect x="209.75" y="385.75" width="19.5" height="18.5" rx="3" fill="#fff" stroke="#5a5a5a" stroke-width="1.5"/><path d="M221,403 L228.5,403 L228.5,394Z" fill="#e0e0e0"/><g transform="translate(210.5,385.5)"><path d="M6.5,3 L16.5,3 L16.5,13 L6.5,13Z" fill="#f2a45c"/><path d="M2.5,6 L12.5,6 L12.5,16 L2.5,16Z M6.5,3 L16.5,3 L16.5,13 L6.5,13Z M2.5,6 L6.5,3 M12.5,6 L16.5,3 M12.5,16 L16.5,13 M2.5,16 L6.5,13" fill="none" stroke="#444" stroke-width="0.7"/></g><rect x="238.75" y="385.75" width="19.5" height="18.5" rx="3" fill="#fff" stroke="#5a5a5a" stroke-width="1.5"/><path d="M250,403 L257.5,403 L257.5,394Z" fill="#e0e0e0"/><g transform="translate(239.5,385.5)"><path d="M2,6 L9,3 L16.5,6 L16.5,14 L9,17.5 L2,14Z" fill="#e8863a"/><path d="M9,9 L16.5,6 L16.5,14 L9,17.5Z" fill="#d06a20"/><path d="M2,6 L9,3 L16.5,6 L9,9Z" fill="#f4a860"/><text x="9.5" y="7" font-size="4.2" font-weight="bold" fill="#222" text-anchor="middle" style="font-family:'Liberation Sans'">FRONT</text></g><rect x="267.75" y="385.75" width="19.5" height="18.5" rx="3" fill="#fff" stroke="#5a5a5a" stroke-width="1.5"/><path d="M279,403 L286.5,403 L286.5,394Z" fill="#e0e0e0"/><g transform="translate(268.5,385.5)"><path d="M2,6 L9,3 L16.5,6 L16.5,14 L9,17.5 L2,14Z" fill="#e8863a"/><path d="M9,9 L16.5,6 L16.5,14 L9,17.5Z" fill="#d06a20"/><path d="M2,6 L9,3 L16.5,6 L9,9Z" fill="#f4a860"/><text x="9.5" y="7" font-size="4.8" font-weight="bold" fill="#222" text-anchor="middle" style="font-family:'Liberation Sans'">BACK</text></g></svg><svg class="a" style="left:98px;top:422px" width="21" height="20" viewBox="0 0 21 20"><rect x="0.5" y="0.5" width="20" height="19" rx="2" fill="#f2f2f2" stroke="#c0c0c0"/><g stroke="#b0b0b0" stroke-width="1.1" fill="none"><circle cx="10" cy="10" r="4"/><path d="M10,2.5 v4 M10,13.5 v4 M2.5,10 h4 M13.5,10 h4"/></g><path d="M14,12 l4,5 l-2,0.5z" fill="#b8b8b8"/></svg><div class="a" style="left:0;top:412px;width:295px;height:2px;border-top:1px solid #a0a0a0;border-bottom:1px solid #fff"></div><div class="t" style="left:19px;top:426px">Rotation Center</div><div class="t" style="left:196px;top:426px">Eye position</div><div class="a" style="left:146px;top:421px;width:2px;height:111px;border-left:1px solid #a0a0a0;border-right:1px solid #fff"></div><div class="spin dis" style="left:9px;top:453px;width:122px"><span class="t" style="left:3px;top:3px">15,287500</span><div class="sb"><i class="up"></i><i class="dn"></i></div></div><div class="spin" style="left:164px;top:453px;width:122px"><span class="t" style="left:3px;top:3px">15,287500</span><div class="sb"><i class="up"></i><i class="dn"></i></div></div><div class="spin dis" style="left:9px;top:479px;width:122px"><span class="t" style="left:3px;top:3px">10,412000</span><div class="sb"><i class="up"></i><i class="dn"></i></div></div><div class="spin" style="left:164px;top:479px;width:122px"><span class="t" style="left:3px;top:3px">10,412000</span><div class="sb"><i class="up"></i><i class="dn"></i></div></div><div class="spin dis" style="left:9px;top:505px;width:122px"><span class="t" style="left:3px;top:3px">2,840500</span><div class="sb"><i class="up"></i><i class="dn"></i></div></div><div class="spin" style="left:164px;top:505px;width:122px"><span class="t" style="left:3px;top:3px">37,424023</span><div class="sb"><i class="up"></i><i class="dn"></i></div></div><div class="a" style="left:0;top:538px;width:295px;height:2px;border-top:1px solid #a0a0a0;border-bottom:1px solid #fff"></div><div class="t" style="left:0;top:551px">f.o.v. (perspective only)</div><div class="spin" style="left:229px;top:548px;width:65px"><span class="t" style="left:3px;top:3px">50,00</span><div class="sb"><i class="up"></i><i class="dn"></i></div></div><div class="a" style="left:221px;top:668px;width:73px;height:21px;border:1px solid #2d8dc4;border-radius:3px;background:linear-gradient(#f0f4f6,#e8eef2 45%,#d8e0e6 50%,#cdd6dc);box-shadow:inset 0 0 0 1px #9ad8f4,inset 0 0 2px 1px #c0ecfc"><span class="t" style="left:0;width:71px;text-align:center;top:4px">OK</span></div></body></html>
